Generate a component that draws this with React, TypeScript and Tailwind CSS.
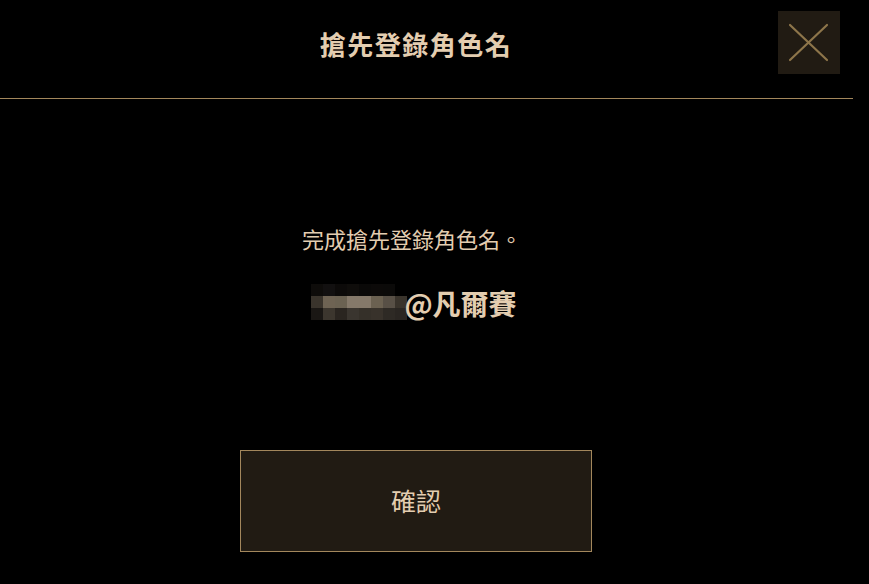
import React from "react";

const rows: string[][] = [
  ["#0e0c0a", "#121010", "#0c0a09", "#0f0d0b", "#0a0908", "#0c0a09", "#0b0a09", "#000000"],
  ["#3a342c", "#6e6353", "#6b6252", "#85796a", "#85796a", "#6b6151", "#585046", "#3a342c"],
  ["#1a1714", "#3c362e", "#2a2520", "#3a352f", "#353029", "#38322b", "#2e2a25", "#2a2622"],
];

export default function App() {
  const font = { fontFamily: '"Noto Sans CJK TC", "Noto Sans", sans-serif' };
  return (
    <div className="w-[869px] h-[584px] bg-black text-[#e3cdb0]" style={font}>
      <div className="relative w-[853px] h-[99px] border-b border-[#a3875c]">
        <div className="w-[832px] h-[98px] flex items-center justify-center">
          <h1 className="text-[26px] font-bold leading-none tracking-[1.5px] -mt-[10px]">搶先登錄角色名</h1>
        </div>
        <button className="absolute left-[778px] top-[11px] w-[62px] h-[63px] bg-[#211b13] flex items-center justify-center">
          <svg width="62" height="63" viewBox="0 0 62 63">
            <path d="M12 14 L49 49 M49 14 L12 49" stroke="#8d754a" strokeWidth="2.2" strokeLinecap="round" />
          </svg>
        </button>
      </div>
      <div className="w-[832px] flex flex-col items-center">
        <p className="mt-[126px] text-[22px] leading-[26px] pr-[8px]">完成搶先登錄角色名。</p>
        <div className="mt-[33px] flex items-center pr-[4px]">
          <div className="flex flex-col">
            {rows.map((r, i) => (
              <div key={i} className="flex">
                {r.map((c, j) => (
                  <div key={j} className="w-[12px] h-[12px]" style={{ backgroundColor: c }} />
                ))}
              </div>
            ))}
          </div>
          <span className="text-[28px] font-bold leading-none -ml-[3px] mt-[2px]">@凡爾賽</span>
        </div>
        <button className="mt-[130px] w-[352px] h-[102px] bg-[#211b13] border border-[#a3875c] flex items-center justify-center text-[25px] text-[#e3cdb0]">
          確認
        </button>
      </div>
    </div>
  );
}
